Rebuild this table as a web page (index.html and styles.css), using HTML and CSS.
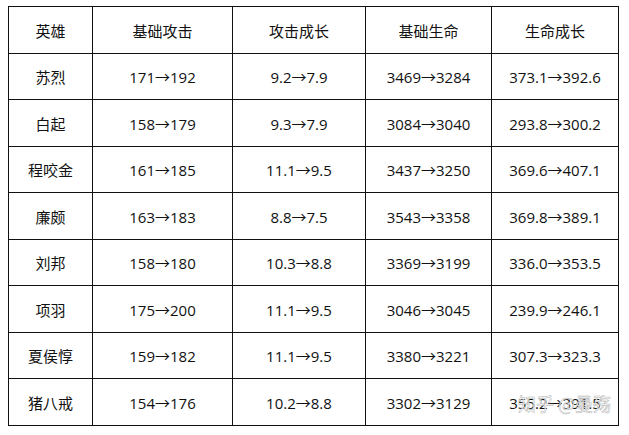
FILE: index.html
```html
<!DOCTYPE html>
<html lang="zh">
<head>
<meta charset="utf-8">
<link rel="stylesheet" href="styles.css">
</head>
<body>
<div class="wrap">
<table class="stats">
  <colgroup>
    <col class="c1"><col class="c2"><col class="c3"><col class="c4"><col class="c5">
  </colgroup>
  <tr><td>英雄</td><td>基础攻击</td><td>攻击成长</td><td>基础生命</td><td>生命成长</td></tr>
  <tr><td>苏烈</td><td>171→192</td><td>9.2→7.9</td><td>3469→3284</td><td>373.1→392.6</td></tr>
  <tr><td>白起</td><td>158→179</td><td>9.3→7.9</td><td>3084→3040</td><td>293.8→300.2</td></tr>
  <tr><td>程咬金</td><td>161→185</td><td>11.1→9.5</td><td>3437→3250</td><td>369.6→407.1</td></tr>
  <tr><td>廉颇</td><td>163→183</td><td>8.8→7.5</td><td>3543→3358</td><td>369.8→389.1</td></tr>
  <tr><td>刘邦</td><td>158→180</td><td>10.3→8.8</td><td>3369→3199</td><td>336.0→353.5</td></tr>
  <tr><td>项羽</td><td>175→200</td><td>11.1→9.5</td><td>3046→3045</td><td>239.9→246.1</td></tr>
  <tr><td>夏侯惇</td><td>159→182</td><td>11.1→9.5</td><td>3380→3221</td><td>307.3→323.3</td></tr>
  <tr><td>猪八戒</td><td>154→176</td><td>10.2→8.8</td><td>3302→3129</td><td class="last">355.2→391.5</td></tr>
</table>
<div class="mark">知乎 @曼殇</div>
</div>
</body>
</html>
```
FILE: styles.css
```css
html, body {
  margin: 0;
  padding: 0;
  background: #fff;
}
.wrap {
  position: relative;
  padding: 6px 0 0 8px;
}
.stats {
  border-collapse: collapse;
  table-layout: fixed;
  width: 611px;
  font-family: "Open Sans", "Noto Sans CJK SC", sans-serif;
  font-size: 15px;
  color: #111;
}
.c1 { width: 84px; }
.c2 { width: 140px; }
.c3 { width: 133px; }
.c4 { width: 126px; }
.c5 { width: 127px; }
.stats tr {
  height: 46.5px;
}
.stats td {
  border: 1px solid #111;
  padding: 2px 0 0;
  text-align: center;
  vertical-align: middle;
  line-height: 16px;
}
.mark {
  position: absolute;
  left: 518px;
  top: 391px;
  font-family: "Noto Sans CJK SC", sans-serif;
  font-size: 18px;
  line-height: 24px;
  color: rgba(255, 255, 255, 0.85);
  -webkit-text-stroke: 0.5px rgba(140, 140, 140, 0.7);
  white-space: nowrap;
}
```
